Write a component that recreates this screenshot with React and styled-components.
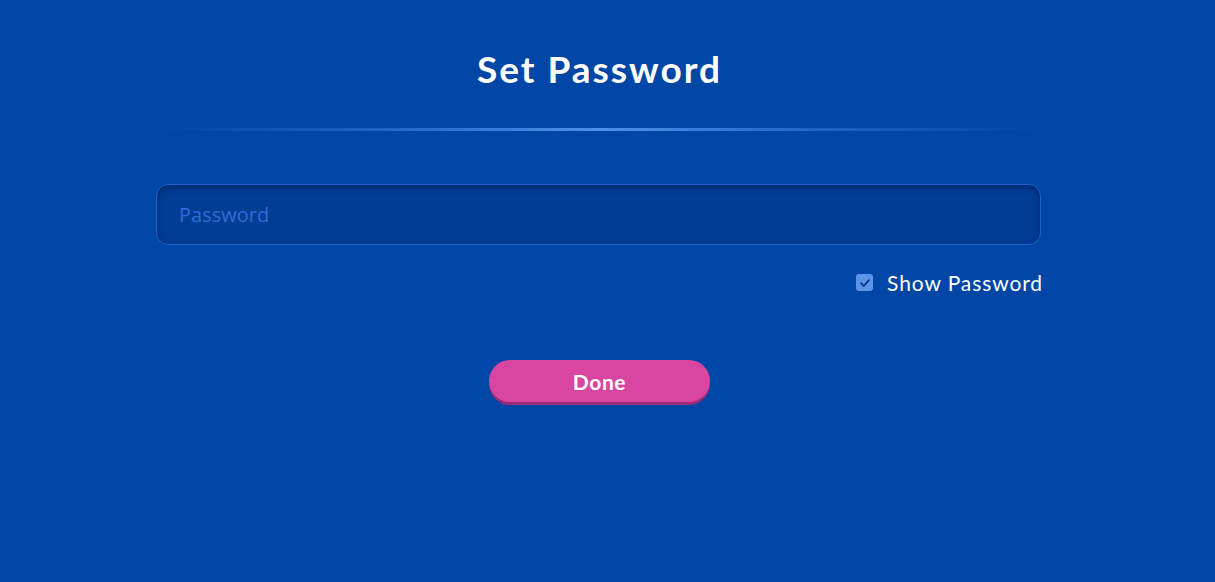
import React, { useState } from 'react';
import styled, { createGlobalStyle } from 'styled-components';

const GlobalStyle = createGlobalStyle`
  html, body {
    margin: 0;
    padding: 0;
    background: #0046a6;
  }
  #root {
    min-height: 100vh;
  }
`;

const Page = styled.div`
  width: 100%;
  height: 582px;
  background: #0046a6;
  font-family: "Lato", "Open Sans", sans-serif;
`;

const Panel = styled.div`
  width: 887px;
  margin-left: 156px;
  padding-top: 46px;
  display: flex;
  flex-direction: column;
`;

const Title = styled.h1`
  margin: 0;
  text-align: center;
  color: #ffffff;
  font-size: 37px;
  font-weight: 700;
  letter-spacing: 2px;
  line-height: 46px;
`;

const Divider = styled.div`
  margin-top: 36px;
  height: 3px;
  background: linear-gradient(
    90deg,
    rgba(60, 130, 230, 0) 0%,
    rgba(60, 130, 230, 0.5) 25%,
    rgba(80, 150, 240, 0.95) 50%,
    rgba(60, 130, 230, 0.5) 75%,
    rgba(60, 130, 230, 0) 100%
  );
`;

const Input = styled.input`
  margin-top: 53px;
  width: 885px;
  height: 61px;
  box-sizing: border-box;
  padding: 0 22px;
  border-radius: 12px;
  border: 1.5px solid #1e5fcc;
  background: #003d95;
  box-shadow: inset 0 3px 6px rgba(0, 20, 70, 0.5);
  color: #ffffff;
  font-family: "Open Sans", sans-serif;
  font-size: 20px;
  outline: none;
  &::placeholder {
    color: #2b6fd6;
  }
`;

const CheckRow = styled.label`
  margin-top: 25px;
  align-self: flex-end;
  display: flex;
  align-items: center;
  gap: 14px;
  color: #ffffff;
  font-size: 21px;
  letter-spacing: 0.9px;
  cursor: pointer;
`;

const Box = styled.span`
  width: 17px;
  height: 17px;
  flex-shrink: 0;
  box-sizing: border-box;
  border-radius: 3px;
  background: ${p => (p.$checked ? '#5b95ea' : 'transparent')};
  border: ${p => (p.$checked ? 'none' : '2px solid #5b95ea')};
  display: flex;
  align-items: center;
  justify-content: center;
`;

const ButtonRow = styled.div`
  margin-top: 65px;
  display: flex;
  justify-content: center;
`;

const DoneButton = styled.button`
  width: 221px;
  height: 42px;
  border: none;
  border-radius: 21px;
  background: #d946a1;
  box-shadow: 0 3px 0 #9b2c7a;
  color: #ffffff;
  font-family: "Lato", sans-serif;
  font-size: 21px;
  font-weight: 700;
  letter-spacing: 0.6px;
  padding: 0;
  cursor: pointer;
`;

export default function App() {
  const [show, setShow] = useState(true);
  return (
    <Page>
      <GlobalStyle />
      <Panel>
        <Title>Set Password</Title>
        <Divider />
        <Input type={show ? 'text' : 'password'} placeholder="Password" />
        <CheckRow onClick={() => setShow(!show)}>
          <Box $checked={show}>
            {show && (
              <svg width="12" height="12" viewBox="0 0 12 12">
                <path d="M2 6.2 L4.8 9 L10 3.2" fill="none" stroke="#0b3580" strokeWidth="1.8" strokeLinecap="round" strokeLinejoin="round" />
              </svg>
            )}
          </Box>
          Show Password
        </CheckRow>
        <ButtonRow>
          <DoneButton>Done</DoneButton>
        </ButtonRow>
      </Panel>
    </Page>
  );
}
